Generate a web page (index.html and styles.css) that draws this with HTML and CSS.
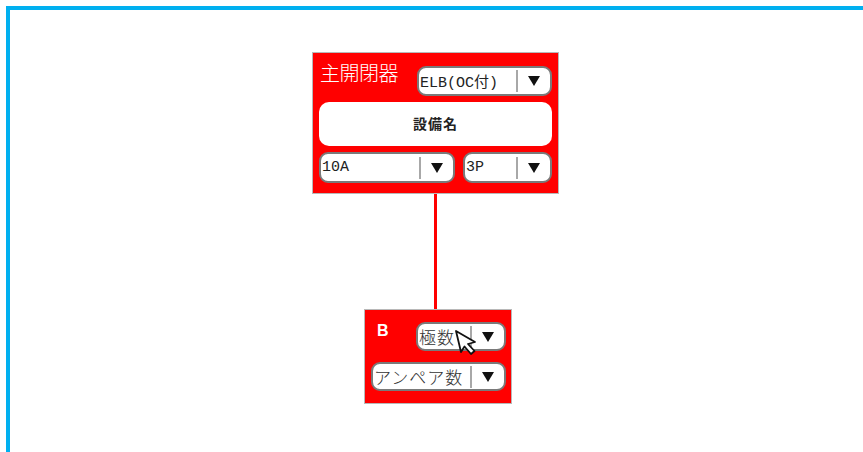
FILE: index.html
```html
<!DOCTYPE html>
<html lang="ja">
<head>
    <meta charset="UTF-8">
    <title>Breaker Diagram</title>
    <link rel="stylesheet" href="styles.css">
</head>
<body>
    <div class="canvas">
        <!-- main breaker -->
        <div class="node main">
            <div class="node-head">
                <span class="node-title">主開閉器</span>
                <div class="sel sel-type">
                    <span class="sel-text">ELB(OC付)</span>
                    <span class="sel-btn"><svg width="12" height="10" viewBox="0 0 12 10"><path d="M0 0H12L6 10Z" fill="#111"/></svg></span>
                </div>
            </div>
            <div class="equip-name">設備名</div>
            <div class="node-row">
                <div class="sel sel-amp">
                    <span class="sel-text">10A</span>
                    <span class="sel-btn"><svg width="12" height="10" viewBox="0 0 12 10"><path d="M0 0H12L6 10Z" fill="#111"/></svg></span>
                </div>
                <div class="sel sel-pole">
                    <span class="sel-text">3P</span>
                    <span class="sel-btn"><svg width="12" height="10" viewBox="0 0 12 10"><path d="M0 0H12L6 10Z" fill="#111"/></svg></span>
                </div>
            </div>
        </div>

        <div class="wire"></div>

        <!-- branch B -->
        <div class="node branch">
            <div class="node-head">
                <span class="branch-label">B</span>
                <div class="sel sel-small">
                    <span class="sel-text jp">極数</span>
                    <span class="sel-btn"><svg width="12" height="10" viewBox="0 0 12 10"><path d="M0 0H12L6 10Z" fill="#111"/></svg></span>
                </div>
            </div>
            <div class="sel sel-wide">
                <span class="sel-text jp">アンペア数</span>
                <span class="sel-btn"><svg width="12" height="10" viewBox="0 0 12 10"><path d="M0 0H12L6 10Z" fill="#111"/></svg></span>
            </div>
            <svg class="cursor" width="26" height="30" viewBox="0 0 26 30">
                <path d="M2 2 L7 23 L10.5 17.5 L17 25 L20.5 22 L14 15 L21 13 Z" fill="#fff" stroke="#111" stroke-width="1.8" stroke-linejoin="round"/>
            </svg>
        </div>
    </div>
</body>
</html>
```

FILE: styles.css
```css
body {
    margin: 0;
    background: #fff;
    font-family: "Noto Sans CJK JP", "Liberation Sans", sans-serif;
}
.canvas {
    box-sizing: border-box;
    height: 446px;
    margin: 6px 0 0 6px;
    border-top: 4px solid #00b0f0;
    border-left: 4px solid #00b0f0;
    padding-top: 42px;
    display: flex;
    flex-direction: column;
    align-items: center;
}
.node {
    box-sizing: border-box;
    background: #ff0000;
    border: 1px solid #b8b8b8;
    position: relative;
}
.main {
    width: 247px;
    height: 142px;
    padding: 9px 6px 0 6px;
    margin-right: 2px;
}
.node-head {
    display: flex;
    justify-content: space-between;
    align-items: flex-start;
}
.node-title {
    color: #fff;
    font-size: 20px;
    font-weight: 300;
    line-height: 22px;
    margin-left: 1px;
    letter-spacing: -0.5px;
}
.sel {
    box-sizing: border-box;
    display: flex;
    align-items: center;
    background: #fff;
    border: 2px solid #7a7a7a;
    border-radius: 9px;
    height: 30px;
}
.sel-text {
    flex: 1;
    padding-left: 1px;
    font-family: "Liberation Mono", "Noto Sans CJK JP", monospace;
    font-size: 15px;
    color: #222;
    white-space: nowrap;
    overflow: hidden;
}
.sel-text.jp {
    font-family: "Noto Sans CJK JP", sans-serif;
    font-size: 17px;
    font-weight: 300;
    letter-spacing: 1px;
    color: #333;
}
.sel-btn {
    width: 32px;
    height: 22px;
    border-left: 2px solid #a8a8a8;
    display: flex;
    align-items: center;
    justify-content: center;
}
.sel-type {
    width: 135px;
    margin-top: 4px;
}
.equip-name {
    margin-top: 6px;
    height: 44px;
    background: #fff;
    border-radius: 10px;
    display: flex;
    align-items: center;
    justify-content: center;
    padding-bottom: 2px;
    box-sizing: border-box;
    font-size: 14px;
    font-weight: bold;
    color: #222;
    letter-spacing: 1px;
}
.node-row {
    display: flex;
    gap: 8px;
    margin-top: 6px;
}
.sel-amp {
    width: 136px;
    height: 31px;
}
.sel-pole {
    flex: 1;
    height: 31px;
}
.wire {
    width: 3px;
    height: 115px;
    background: #ff0000;
    margin-right: 2px;
}
.branch {
    width: 148px;
    height: 95px;
    padding: 12px 5px 0 6px;
    margin-left: 3px;
}
.branch-label {
    color: #fff;
    font-family: "Liberation Sans", sans-serif;
    font-weight: bold;
    font-size: 16px;
    line-height: 16px;
    margin: 1px 0 0 6px;
}
.sel-small {
    width: 90px;
    height: 29px;
}
.sel-wide {
    margin-top: 11px;
    height: 29px;
}
.cursor {
    position: absolute;
    left: 89px;
    top: 19px;
}
```
